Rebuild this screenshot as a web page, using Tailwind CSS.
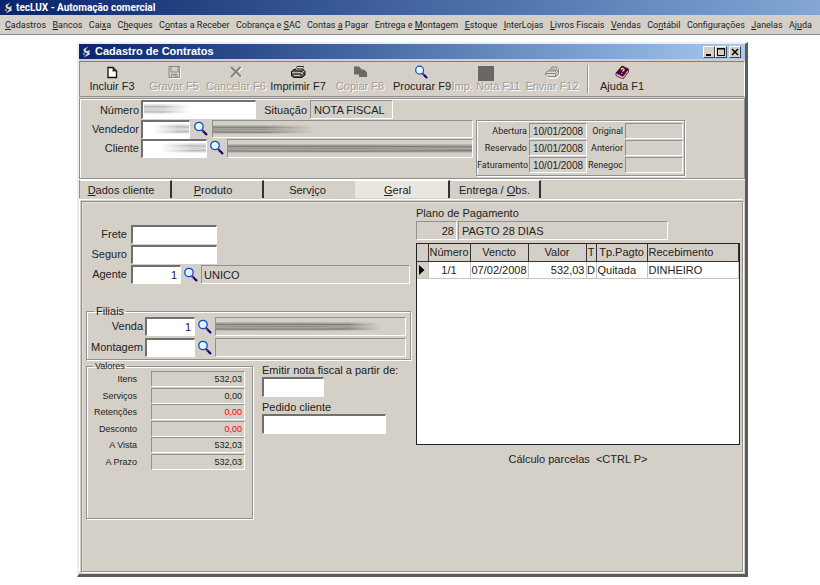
<!DOCTYPE html>
<html lang="pt-BR">
<head>
<meta charset="utf-8">
<title>tecLUX - Automação comercial</title>
<script src="https://cdn.jsdelivr.net/npm/@tailwindcss/browser@4"></script>
</head>
<body class="flex min-h-screen flex-col bg-white font-['Liberation_Sans',Arial,sans-serif] text-[11px] leading-[14px] text-[#222]">

<svg class="absolute h-0 w-0" aria-hidden="true">
  <defs>
    <linearGradient id="band" x2="0" y2="1"><stop offset="0" stop-color="#555" stop-opacity=".15"/><stop offset=".3" stop-color="#444" stop-opacity=".45"/><stop offset=".55" stop-color="#555" stop-opacity=".2"/><stop offset=".75" stop-color="#333" stop-opacity=".4"/><stop offset="1" stop-color="#555" stop-opacity=".1"/></linearGradient>
    <symbol id="smear" viewBox="0 0 100 10" preserveAspectRatio="none">
      <rect width="100" height="10" fill="url(#band)"/>
      <path d="M0 2.500H60L100 3.500M0 5.500L50 5L100 6M0 8L40 8.500L100 7.500" stroke="#333" stroke-width=".9" opacity=".3" fill="none"/>
    </symbol>
    <symbol id="lens" viewBox="0 0 16 16">
      <path d="M9 9l5 5" stroke="#00007c" stroke-width="2.200"/>
      <path d="M9 9.500l1.500 1.500" stroke="#c33" stroke-width="1.500"/>
      <circle cx="6" cy="5.500" r="4.200" fill="#d8fbff" stroke="#1746c8" stroke-width="1.300"/>
      <path d="M3.800 5a2.500 2.500 0 0 1 2-2" stroke="#fff" stroke-width="1.200" fill="none"/>
    </symbol>
    <symbol id="bolt" viewBox="0 0 10 12">
      <path d="M7 0L1.500 3L2.500 6.500L7.500 5L4 4.500L4 3.500Z" fill="currentColor"/>
      <path d="M9 3.500L3 6.500L6 7.500L2 12L9 8.500L8 6Z" fill="currentColor"/>
      <path d="M.5 8l2.500-1.500v4z" fill="currentColor" opacity=".7"/>
    </symbol>
  </defs>
</svg>

<header>
  <div class="flex h-[15px] items-center gap-[3px] bg-linear-to-r from-[#0a246a] to-[#84a7d8] pl-1 font-['Roboto',sans-serif] text-[10px] font-bold text-white">
    <svg class="h-3 w-[9px] text-[#ddd6c8]" aria-hidden="true"><use href="#bolt"/></svg>
    <h1>tecLUX - Automação comercial</h1>
  </div>
  <nav aria-label="Menu principal" class="flex h-[20px] items-center justify-between border-b border-[#8c8a86] bg-[#d4d0c8] pr-2 pl-[5px] font-['Roboto',sans-serif] text-[9px] whitespace-nowrap">
    <a href="#"><u>C</u>adastros</a><a href="#"><u>B</u>ancos</a><a href="#">Cai<u>x</u>a</a><a href="#">C<u>h</u>eques</a><a href="#">C<u>o</u>ntas a Receber</a><a href="#">Cobrança e <u>S</u>AC</a><a href="#">Contas <u>a</u> Pagar</a><a href="#">Entrega e <u>M</u>ontagem</a><a href="#"><u>E</u>stoque</a><a href="#"><u>I</u>nterLojas</a><a href="#"><u>L</u>ivros Fiscais</a><a href="#"><u>V</u>endas</a><a href="#">Co<u>n</u>tábil</a><a href="#">Configurações</a><a href="#"><u>J</u>anelas</a><a href="#">Aj<u>u</u>da</a>
  </nav>
</header>

<main class="mt-[7px] mr-[72px] mb-2 ml-[77px] flex flex-1 flex-col border-t-2 border-r-[3px] border-b-[3px] border-l-2 border-t-[#efede9] border-r-[#5c5c5c] border-b-[#5c5c5c] border-l-[#efede9] bg-[#d4d0c8]">
  <div class="mb-0.5 flex h-[15px] items-center bg-linear-to-r from-[#0a246a] to-[#a6caf0] pr-1 pl-[3px] font-bold text-white">
    <svg class="mr-1 h-3 w-[9px] text-[#ddd6e8]" aria-hidden="true"><use href="#bolt"/></svg>
    <h2 class="flex-1 pb-px">Cadastro de Contratos</h2>
    <button aria-label="Minimizar" class="h-3 w-3 border border-t-white border-r-[#444] border-b-[#444] border-l-white bg-[#d4d0c8]"><svg viewBox="0 0 10 10"><path d="M2 8h5" stroke="#000" stroke-width="2"/></svg></button>
    <button aria-label="Maximizar" class="h-3 w-3 border border-t-white border-r-[#444] border-b-[#444] border-l-white bg-[#d4d0c8]"><svg viewBox="0 0 10 10"><path d="M1 2h8M1.500 1v7.500h7V1" stroke="#000" fill="none"/><path d="M1 1.500h8" stroke="#000"/></svg></button>
    <button aria-label="Fechar" class="ml-0.5 h-3 w-3 border border-t-white border-r-[#444] border-b-[#444] border-l-white bg-[#d4d0c8]"><svg viewBox="0 0 10 10"><path d="M2 2l6 6M8 2l-6 6" stroke="#000" stroke-width="1.500"/></svg></button>
  </div>

  <div role="toolbar" aria-label="Ações" class="flex h-[36px] border border-t-[#808080] border-r-white border-b-[#909090] border-l-[#909090] pt-[3px] pl-px whitespace-nowrap">
    <button class="flex w-[62px] flex-col items-center"><svg class="h-[14px] w-4" viewBox="0 0 16 14"><path d="M4 2.500h5l3.500 3.500v6.500H4z" fill="#fff" stroke="#111" stroke-width="1.300"/><path d="M8.500 2v4.500h4z" fill="#333"/></svg><span>Incluir F3</span></button>
    <button disabled class="flex w-[62px] flex-col items-center text-[#a09d98] [text-shadow:1px_1px_0_#fff]"><svg class="h-[14px] w-4" viewBox="0 0 16 14"><path d="M3 1.500h10.500v11H3z M5 2v5h7V2 M5.500 12.500V9.500h5.500v3 M9 10v2" fill="none" stroke="#8a8884" stroke-width="1"/><path d="M3.500 13.500h11V3" fill="none" stroke="#fff" stroke-width=".8"/></svg><span>Gravar F5</span></button>
    <button disabled class="flex w-[62px] flex-col items-center text-[#a09d98] [text-shadow:1px_1px_0_#fff]"><svg class="h-[14px] w-4" viewBox="0 0 16 14"><path d="M4 3l10 9M14 3L4 12" stroke="#fff" stroke-width="1.500"/><path d="M3 2l10 9.500M12.500 2L3 12" stroke="#85827e" stroke-width="2"/></svg><span>Cancelar F6</span></button>
    <button class="flex w-[62px] flex-col items-center"><svg class="h-[14px] w-4" viewBox="0 0 16 14"><path d="M5 6l2-4.500h6.500L11.500 6z" fill="#fff" stroke="#222"/><path d="M1.500 6.500L4 4.500h9l2 1.500v4l-3 2.500H4L1.500 11z" fill="#555" stroke="#111"/><path d="M6 4.500l1-2.500h6l-1 2.500z" fill="#eee"/><path d="M7 3.500h5" stroke="#333" stroke-width=".8"/><path d="M2 7.500h9.500l3-1.500M4 10.500h6" stroke="#ccc" stroke-width=".9"/><path d="M11 8.500h2" stroke="#cc3"/></svg><span>Imprimir F7</span></button>
    <button disabled class="flex w-[62px] flex-col items-center text-[#a09d98] [text-shadow:1px_1px_0_#fff]"><svg class="h-[14px] w-4" viewBox="0 0 16 14"><path d="M2 1.500h5l2 2V4.500h3l3 3V12H7V9.500H2z" fill="#6b6966"/></svg><span>Copiar F8</span></button>
    <button class="flex w-[62px] flex-col items-center"><svg class="h-[14px] w-4"><use href="#lens" width="15" height="15"/></svg><span>Procurar F9</span></button>
    <button disabled class="flex w-[66px] flex-col items-center text-[#a09d98] [text-shadow:1px_1px_0_#fff]"><svg class="-mb-0.5 h-4 w-4" viewBox="0 0 16 16"><path d="M0 1h16v15H0z" fill="#696663"/></svg><span>Imp. Nota F11</span></button>
    <button disabled class="flex w-[66px] flex-col items-center text-[#a09d98] [text-shadow:1px_1px_0_#fff]"><svg class="h-[14px] w-4" viewBox="0 0 16 14"><g fill="none" stroke="#fff" transform="translate(1 1)"><path d="M4 6l3-4h6l-2 4M2 7l2-1h8l3-2v4l-3 4H3L1 10z"/></g><g fill="#dedbd5" stroke="#8b8884"><path d="M5 6l3-4h5.500L11 6z"/><path d="M1.500 8L4 6h8l2.500-2v4L12 11.500H3.500L1.500 10z"/><path d="M2 8.500h9.500V11M12 8l2-2M7 4h4"/></g></svg><span>Enviar F12</span></button>
    <div class="mx-0.5 h-[28px] w-0.5 border-r border-l border-r-white border-l-[#909090]"></div>
    <button class="flex w-[62px] flex-col items-center"><svg class="h-[14px] w-4" viewBox="0 0 16 14"><path d="M2 8L8 1l6.500 3L9 11.500z" fill="#4c0070" stroke="#260038" stroke-width=".8"/><path d="M2 8v2.500L9 14l5.500-7V4L9 11.500z" fill="#fff" stroke="#5c1111" stroke-width=".9"/><path d="M3 10l6 3 5-6.500" stroke="#a66" stroke-width=".6" fill="none"/><path d="M7 4.500c1-1.800 4-.8 2.800.8L8.300 6.500M7.500 8l.5.600" stroke="#ffd81c" stroke-width="1.400" fill="none"/></svg><span>Ajuda F1</span></button>
  </div>

  <form class="flex flex-1 flex-col">
    <section aria-label="Contrato" class="mt-px mb-px flex h-[81px] justify-between border border-[#909090] pt-px pr-[59px] shadow-[inset_1px_1px_0_#fff,0_1px_0_#fff]">
      <div class="flex w-[393px] flex-col">
        <div class="flex h-5 items-start">
          <label for="numero" class="w-[61px] pt-[3px] pr-[2px] text-right">Número</label>
          <div class="relative flex w-[115px]"><input id="numero" class="h-[19px] w-full border border-t-2 border-l-2 border-t-[#707070] border-r-white border-b-white border-l-[#707070] bg-white px-1"><svg class="absolute top-[4px] left-[3px] h-[10px] w-[46px] mask-r-from-40% mask-r-to-100% opacity-70" aria-hidden="true"><use href="#smear"/></svg></div>
          <label for="situacao" class="w-[54px] pt-[3px] pr-[3px] text-right">Situação</label>
          <input id="situacao" readonly value="NOTA FISCAL" class="h-[19px] w-[83px] border border-t-[#909090] border-r-white border-b-white border-l-[#909090] px-[3px]">
        </div>
        <div class="flex h-[19px] items-start">
          <label for="vendedor" class="w-[61px] pt-[2px] pr-[2px] text-right">Vendedor</label>
          <div class="relative flex w-[49px]"><input id="vendedor" class="h-[19px] w-full border border-t-2 border-l-2 border-t-[#707070] border-r-white border-b-white border-l-[#707070] bg-white px-1"><svg class="absolute top-[4px] right-px h-[10px] w-[36px] mask-l-from-30% mask-l-to-100% opacity-70" aria-hidden="true"><use href="#smear"/></svg></div>
          <button type="button" aria-label="Procurar vendedor" class="mx-[3px] mt-px h-4 w-4"><svg class="h-4 w-4"><use href="#lens"/></svg></button>
          <div class="h-[18px] flex-1 border border-t-[#909090] border-r-white border-b-white border-l-[#909090] pt-[4px]"><svg class="h-[9px] w-[102px] mask-r-from-50% mask-r-to-100%" aria-hidden="true"><use href="#smear"/></svg></div>
        </div>
        <div class="flex h-5 items-start">
          <label for="cliente" class="w-[61px] pt-[2px] pr-[2px] text-right">Cliente</label>
          <div class="relative flex w-[66px]"><input id="cliente" class="h-[19px] w-full border border-t-2 border-l-2 border-t-[#707070] border-r-white border-b-white border-l-[#707070] bg-white px-1"><svg class="absolute top-[4px] right-px h-[10px] w-[46px] mask-l-from-30% mask-l-to-100% opacity-70" aria-hidden="true"><use href="#smear"/></svg></div>
          <button type="button" aria-label="Procurar cliente" class="mx-[2px] mt-px h-4 w-4"><svg class="h-4 w-4"><use href="#lens"/></svg></button>
          <div class="h-[19px] flex-1 border border-t-[#909090] border-r-white border-b-white border-l-[#909090] pt-[4px]"><svg class="h-[9px] w-full" aria-hidden="true"><use href="#smear"/></svg></div>
        </div>
      </div>
      <div class="mt-[20px] grid h-[56px] w-[209px] grid-cols-[52px_58px_38px_58px] content-start items-center gap-y-px border border-[#909090] pt-[2px] font-['Roboto',sans-serif] text-[9px] shadow-[inset_1px_1px_0_#fff,1px_1px_0_#fff]">
        <label for="abertura" class="pr-[2px] text-right">Abertura</label><input id="abertura" readonly value="10/01/2008" class="h-4 w-full border border-t-[#909090] border-r-white border-b-white border-l-[#909090] px-[3px] font-['Liberation_Sans'] text-[10px]">
        <label for="original" class="pr-[2px] text-right">Original</label><input id="original" readonly class="h-4 w-full border border-t-[#909090] border-r-white border-b-white border-l-[#909090]">
        <label for="reservado" class="pr-[2px] text-right">Reservado</label><input id="reservado" readonly value="10/01/2008" class="h-4 w-full border border-t-[#909090] border-r-white border-b-white border-l-[#909090] px-[3px] font-['Liberation_Sans'] text-[10px]">
        <label for="anterior" class="pr-[2px] text-right">Anterior</label><input id="anterior" readonly class="h-4 w-full border border-t-[#909090] border-r-white border-b-white border-l-[#909090]">
        <label for="faturamento" class="pr-[2px] text-right">Faturamento</label><input id="faturamento" readonly value="10/01/2008" class="h-4 w-full border border-t-[#909090] border-r-white border-b-white border-l-[#909090] px-[3px] font-['Liberation_Sans'] text-[10px]">
        <label for="renegoc" class="pr-[2px] text-right">Renegoc</label><input id="renegoc" readonly class="h-4 w-full border border-t-[#909090] border-r-white border-b-white border-l-[#909090]">
      </div>
    </section>

    <div role="tablist" class="flex h-[18px] shrink-0 items-stretch border-l border-[#909090]">
      <button type="button" role="tab" class="w-[92px] border-t border-r-2 border-t-white border-r-[#333] pr-2"><u>D</u>ados cliente</button>
      <button type="button" role="tab" class="w-[92px] border-t border-r-2 border-t-white border-r-[#333] pr-2"><u>P</u>roduto</button>
      <button type="button" role="tab" class="w-[91px] border-t border-t-white pr-1">Serv<u>i</u>ço</button>
      <button type="button" role="tab" aria-selected="true" class="w-[95px] border-t border-r-2 border-t-white border-r-[#333] bg-[#ebe7df] pr-2"><u>G</u>eral</button>
      <button type="button" role="tab" class="w-[91px] border-t border-r-2 border-t-white border-r-[#333]">Entrega / <u>O</u>bs.</button>
    </div>

    <div role="tabpanel" class="mt-px mr-0.5 mb-0.5 flex flex-1 border-t border-l border-white pt-px pl-px">
      <div class="flex flex-1 border border-[#909090] pr-[2px] pl-1 shadow-[inset_1px_1px_0_#e4e1dc,1px_1px_0_#fff]">
        <div class="w-[325px]">
          <div class="mt-[23px] flex flex-col">
            <div class="flex h-5"><label for="frete" class="w-[45px] pt-[2px] pr-1 text-right">Frete</label><input id="frete" class="h-[19px] w-[86px] border border-t-2 border-l-2 border-t-[#707070] border-r-white border-b-white border-l-[#707070] bg-white px-1"></div>
            <div class="flex h-5"><label for="seguro" class="w-[45px] pt-[2px] pr-1 text-right">Seguro</label><input id="seguro" class="h-[19px] w-[86px] border border-t-2 border-l-2 border-t-[#707070] border-r-white border-b-white border-l-[#707070] bg-white px-1"></div>
            <div class="flex h-5"><label for="agente" class="w-[45px] pt-[2px] pr-1 text-right">Agente</label><input id="agente" value="1" class="h-[19px] w-[50px] border border-t-2 border-l-2 border-t-[#707070] border-r-white border-b-white border-l-[#707070] bg-white px-[3px] text-right">
              <button type="button" aria-label="Procurar agente" class="mx-[2px] mt-0.5 h-4 w-4"><svg class="h-4 w-4"><use href="#lens"/></svg></button>
              <input readonly aria-label="Nome do agente" value="UNICO" class="h-[19px] w-[209px] border border-t-[#909090] border-r-white border-b-white border-l-[#909090] px-[2px]"></div>
          </div>

          <fieldset class="mt-[19px] border border-[#909090] pb-px shadow-[inset_1px_1px_0_#fff,1px_1px_0_#fff]">
            <legend class="ml-[7px] h-[14px] px-[2px]">Filiais</legend>
            <div class="-mt-[1px] flex h-5"><label for="venda" class="w-[58px] pt-[2px] pr-[2px] text-right">Venda</label><input id="venda" value="1" class="h-[19px] w-[50px] border border-t-2 border-l-2 border-t-[#707070] border-r-white border-b-white border-l-[#707070] bg-white px-[3px] text-right">
              <button type="button" aria-label="Procurar filial de venda" class="mx-[2px] mt-0.5 h-4 w-4"><svg class="h-4 w-4"><use href="#lens"/></svg></button>
              <div class="h-[19px] w-[191px] border border-t-[#909090] border-r-white border-b-white border-l-[#909090] pt-[4px]"><svg class="h-[9px] w-[165px] mask-r-from-80% mask-r-to-100%" aria-hidden="true"><use href="#smear"/></svg></div></div>
            <div class="mt-px flex h-5"><label for="montagem" class="w-[58px] pt-[2px] pr-[2px] text-right">Montagem</label><input id="montagem" class="h-[19px] w-[50px] border border-t-2 border-l-2 border-t-[#707070] border-r-white border-b-white border-l-[#707070] bg-white px-[3px] text-right">
              <button type="button" aria-label="Procurar filial de montagem" class="mx-[2px] mt-0.5 h-4 w-4"><svg class="h-4 w-4"><use href="#lens"/></svg></button>
              <div class="h-[19px] w-[191px] border border-t-[#909090] border-r-white border-b-white border-l-[#909090]"></div></div>
          </fieldset>

          <div class="flex gap-[9px]">
            <fieldset class="h-[159px] w-[167px] border border-[#909090] text-[9px] leading-[12px] shadow-[inset_1px_1px_0_#fff,1px_1px_0_#fff]">
              <legend class="ml-[6px] px-[2px]">Valores</legend>
              <dl class="-mt-px grid h-[99px] grid-cols-[50px_94px] items-center gap-x-[14px] text-right">
                <dt>Itens</dt><dd class="h-4 border border-t-[#909090] border-r-white border-b-white border-l-[#909090] pt-px pr-[2px]">532,03</dd>
                <dt>Serviços</dt><dd class="h-4 border border-t-[#909090] border-r-white border-b-white border-l-[#909090] pt-px pr-[2px]">0,00</dd>
                <dt>Retenções</dt><dd class="h-4 border border-t-[#909090] border-r-white border-b-white border-l-[#909090] pt-px pr-[2px] text-[#f00]">0,00</dd>
                <dt>Desconto</dt><dd class="h-4 border border-t-[#909090] border-r-white border-b-white border-l-[#909090] pt-px pr-[2px] text-[#f00]">0,00</dd>
                <dt>A Vista</dt><dd class="h-4 border border-t-[#909090] border-r-white border-b-white border-l-[#909090] pt-px pr-[2px]">532,03</dd>
                <dt>A Prazo</dt><dd class="h-4 border border-t-[#909090] border-r-white border-b-white border-l-[#909090] pt-px pr-[2px]">532,03</dd>
              </dl>
            </fieldset>
            <div class="flex flex-col items-start pt-[3px] whitespace-nowrap">
              <label for="emitir">Emitir nota fiscal a partir de:</label>
              <input id="emitir" class="h-5 w-[62px] border border-t-2 border-l-2 border-t-[#707070] border-r-white border-b-white border-l-[#707070] bg-white px-1">
              <label for="pedido" class="mt-[3px]">Pedido cliente</label>
              <input id="pedido" class="h-5 w-[124px] border border-t-2 border-l-2 border-t-[#707070] border-r-white border-b-white border-l-[#707070] bg-white px-1">
            </div>
          </div>
        </div>

        <div class="ml-[5px] flex flex-1 flex-col pt-[4px]">
          <label for="plano">Plano de Pagamento</label>
          <div class="mt-px mb-[3px] flex gap-px">
            <input id="plano" readonly value="28" class="h-[19px] w-[41px] border border-t-[#909090] border-r-white border-b-white border-l-[#909090] px-[2px] text-right">
            <input readonly aria-label="Descrição do plano" value="PAGTO 28 DIAS" class="h-[19px] w-[210px] border border-t-[#909090] border-r-white border-b-white border-l-[#909090] px-[3px]">
          </div>
          <div class="h-[202px] border border-[#222] bg-white">
            <table class="w-full table-fixed border-collapse whitespace-nowrap">
              <colgroup><col class="w-[11px]"><col class="w-[42px]"><col class="w-[58px]"><col class="w-[58px]"><col class="w-[10px]"><col class="w-[51px]"><col></colgroup>
              <thead>
                <tr class="h-[17px] bg-[#d4d0c8] [&>th]:border-r [&>th]:border-b [&>th]:border-[#333] [&>th]:p-0 [&>th]:font-normal">
                  <th></th><th>Número</th><th>Vencto</th><th>Valor</th><th>T</th><th>Tp.Pagto</th><th class="text-left"><span class="pl-px">Recebimento</span></th>
                </tr>
              </thead>
              <tbody>
                <tr class="h-[17px] [&>td]:border-r [&>td]:border-b [&>td]:border-[#c8c5bf] [&>td]:p-0">
                  <td class="bg-[#d4d0c8]"><svg class="ml-0.5 h-[10px] w-[6px]" viewBox="0 0 6 10" aria-label="Linha atual"><path d="M0 0l5.500 5L0 10z" fill="#000"/></svg></td>
                  <td class="text-center">1/1</td><td class="text-center">07/02/2008</td><td class="text-right"><span class="pr-px">532,03</span></td><td class="text-center">D</td><td><span class="pl-px">Quitada</span></td><td><span class="pl-px">DINHEIRO</span></td>
                </tr>
              </tbody>
            </table>
          </div>
          <p class="mt-[7px] text-center whitespace-pre">Cálculo parcelas  &lt;CTRL P&gt;</p>
        </div>
      </div>
    </div>
  </form>
</main>
</body>
</html>
